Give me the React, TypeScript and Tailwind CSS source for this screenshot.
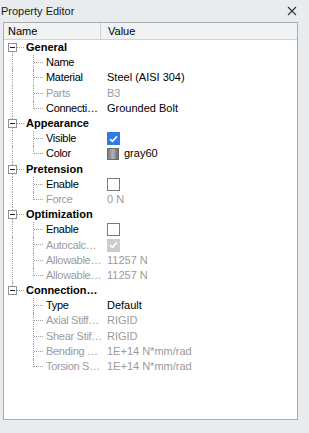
import React from "react";

type Prop = {
  name: string;
  value?: string;
  kind?: "text" | "check" | "color";
  checked?: boolean;
  disabled?: boolean;
};

type Group = { title: string; props: Prop[] };

const groups: Group[] = [
  {
    title: "General",
    props: [
      { name: "Name", value: "" },
      { name: "Material", value: "Steel (AISI 304)" },
      { name: "Parts", value: "B3", disabled: true },
      { name: "Connecti…", value: "Grounded Bolt" },
    ],
  },
  {
    title: "Appearance",
    props: [
      { name: "Visible", kind: "check", checked: true },
      { name: "Color", kind: "color", value: "gray60" },
    ],
  },
  {
    title: "Pretension",
    props: [
      { name: "Enable", kind: "check", checked: false },
      { name: "Force", value: "0 N", disabled: true },
    ],
  },
  {
    title: "Optimization",
    props: [
      { name: "Enable", kind: "check", checked: false },
      { name: "Autocalc…", kind: "check", checked: true, disabled: true },
      { name: "Allowable…", value: "11257 N", disabled: true },
      { name: "Allowable…", value: "11257 N", disabled: true },
    ],
  },
  {
    title: "Connection…",
    props: [
      { name: "Type", value: "Default" },
      { name: "Axial Stiff…", value: "RIGID", disabled: true },
      { name: "Shear Stif…", value: "RIGID", disabled: true },
      { name: "Bending …", value: "1E+14 N*mm/rad", disabled: true },
      { name: "Torsion S…", value: "1E+14 N*mm/rad", disabled: true },
    ],
  },
];

const CheckBox = ({ checked, disabled }: { checked?: boolean; disabled?: boolean }) => {
  if (!checked) {
    return <div className="w-[13px] h-[13px] border border-[#7a7a7a] bg-white" />;
  }
  return (
    <div
      className={`w-[13px] h-[13px] flex items-center justify-center ${
        disabled ? "bg-[#c9cdd1]" : "bg-[#2f7be6]"
      }`}
    >
      <svg width="9" height="8" viewBox="0 0 9 8">
        <path d="M1 4.2 L3.4 6.4 L8 1.4" fill="none" stroke="white" strokeWidth="1.6" />
      </svg>
    </div>
  );
};

const Swatch = () => (
  <div className="w-[12px] h-[12px] border border-[#6d6d6d] bg-gradient-to-r from-[#7d7d7d] via-[#b5b5b5] to-[#6a6a6a]" />
);

function GroupRow({ title, first, last }: { title: string; first: boolean; last: boolean }) {
  return (
    <div className="flex h-[15.2px] items-center">
      <div className="relative w-[20px] h-full">
        {!first && (
          <div className="absolute left-[8px] top-0 h-[3px] border-l border-dotted border-[#a0a0a0]" />
        )}
        {!last && (
          <div className="absolute left-[8px] bottom-0 h-[3px] border-l border-dotted border-[#a0a0a0]" />
        )}
        <div className="absolute left-[4px] top-[3px] w-[9px] h-[9px] border border-[#919191] bg-white flex items-center justify-center">
          <div className="w-[5px] h-[1px] bg-[#1e1e1e]" />
        </div>
        <div className="absolute left-[13px] top-[7px] w-[7px] border-t border-dotted border-[#a0a0a0]" />
      </div>
      <span className="pl-[2px] font-bold text-black whitespace-nowrap">{title}</span>
    </div>
  );
}

function PropRow({ p, lastGroup, lastChild }: { p: Prop; lastGroup: boolean; lastChild: boolean }) {
  const tone = p.disabled ? "text-[#9b9b9b]" : "text-black";
  return (
    <div className="flex h-[15.2px] items-center">
      <div className="relative w-[20px] h-full">
        {!lastGroup && (
          <div className="absolute left-[8px] top-0 h-full border-l border-dotted border-[#a0a0a0]" />
        )}
      </div>
      <div className="relative w-[22px] h-full">
        <div
          className={`absolute left-[9px] top-0 border-l border-dotted border-[#a0a0a0] ${
            lastChild ? "h-[8px]" : "h-full"
          }`}
        />
        <div className="absolute left-[10px] top-[7px] w-[9px] border-t border-dotted border-[#a0a0a0]" />
      </div>
      <div className={`w-[55px] whitespace-nowrap tracking-[-0.3px] ${tone}`}>{p.name}</div>
      <div className={`flex items-center gap-[5px] pl-[6px] whitespace-nowrap ${tone}`}>
        {p.kind === "check" && <CheckBox checked={p.checked} disabled={p.disabled} />}
        {p.kind === "color" && <Swatch />}
        {p.value && <span>{p.value}</span>}
      </div>
    </div>
  );
}

export default function App() {
  return (
    <div
      className="w-[309px] h-[433px] bg-[#e8ecef] text-[11px] leading-none text-black flex flex-col"
      style={{ fontFamily: '"Liberation Sans", Arial, sans-serif' }}
    >
      {/* Title bar */}
      <div className="h-[22px] flex items-center justify-between pl-[1px] pr-[12px]">
        <span className="text-[#1a1a1a]">Property Editor</span>
        <svg width="10" height="10" viewBox="0 0 10 10">
          <path d="M1 1 L9 9 M9 1 L1 9" stroke="#333" strokeWidth="1.1" />
        </svg>
      </div>

      {/* Tree panel */}
      <div className="ml-[3px] w-[295px] h-[398px] border border-[#a9abad] bg-white flex flex-col">
        <div className="flex h-[17px] bg-[#f1f2f3] border-b border-[#d0d2d4]">
          <div className="w-[97px] border-r border-[#cfd1d3] flex items-center pl-[4px]">Name</div>
          <div className="flex items-center pl-[7px]">Value</div>
        </div>

        <div className="flex flex-col">
          {groups.map((g, gi) => (
            <React.Fragment key={gi}>
              <GroupRow title={g.title} first={gi === 0} last={gi === groups.length - 1} />
              {g.props.map((p, pi) => (
                <PropRow
                  key={pi}
                  p={p}
                  lastGroup={gi === groups.length - 1}
                  lastChild={pi === g.props.length - 1}
                />
              ))}
            </React.Fragment>
          ))}
        </div>
      </div>
    </div>
  );
}
